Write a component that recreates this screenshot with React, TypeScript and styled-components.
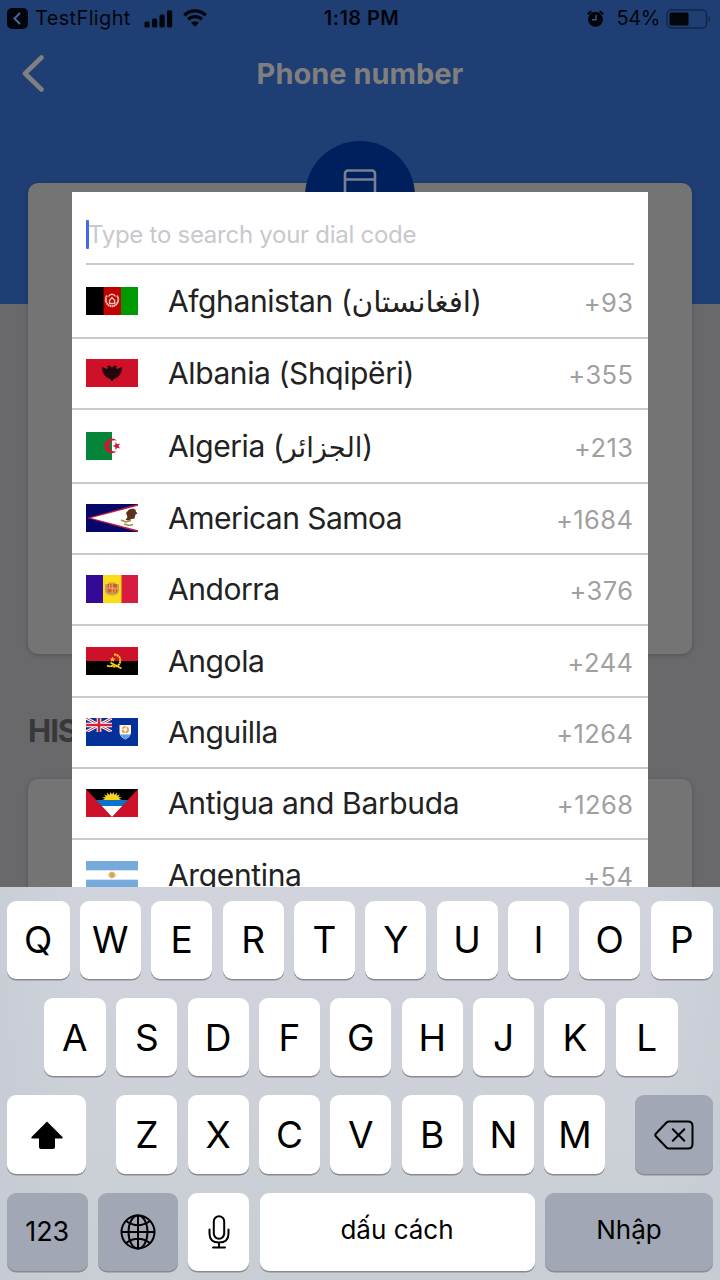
import React from "react";
import styled, { createGlobalStyle } from "styled-components";

const GlobalStyle = createGlobalStyle`
  * { box-sizing: border-box; }
  body { margin: 0; background: #69696c; }
`;

const Screen = styled.div`
  width: 720px;
  height: 1280px;
  display: flex;
  flex-direction: column;
  overflow: hidden;
  font-family: Inter, "Liberation Sans", "DejaVu Sans", sans-serif;
`;

const Page = styled.main`
  position: relative;
  height: 887px;
  flex: none;
  overflow: hidden;
  background: linear-gradient(#1f3e73 0 304px, #69696c 304px);
`;

/* ---------- status bar ---------- */

const StatusBar = styled.div`
  height: 36px;
  padding: 1px 9px 0 7px;
  display: grid;
  grid-template-columns: 1fr auto 1fr;
  align-items: center;
  color: #02050b;
  font-size: 20px;
  line-height: 24px;
`;

const StatusSide = styled.div<{ $end?: boolean }>`
  display: flex;
  align-items: center;
  justify-content: ${(p) => (p.$end ? "flex-end" : "flex-start")};
`;

const AppName = styled.span`
  margin: 0 13px 0 7px;
  padding-bottom: 1px;
  letter-spacing: 0.35px;
`;

const Clock = styled.span`
  font-weight: 600;
  letter-spacing: 0.4px;
  padding: 0 0 1px 5px;
`;

const Percent = styled.span`
  margin: 0 6px 0 12px;
  padding-bottom: 1px;
  letter-spacing: -0.4px;
`;

const WifiIcon = styled.svg`
  margin: 0 0 2px 10px;
`;

/* ---------- navigation ---------- */

const NavBar = styled.header`
  height: 74px;
  padding: 0 22px;
  display: grid;
  grid-template-columns: 24px 1fr 24px;
  align-items: center;
`;

const Title = styled.h1`
  margin: 0;
  text-align: center;
  font-size: 29px;
  font-weight: 700;
  color: #7f7f80;
`;

const Panel = styled.section<{ $height: number }>`
  height: ${(p) => p.$height}px;
  margin: 0 28px;
  border-radius: 10px;
  background: #747474;
  box-shadow: 0 1px 5px rgba(0, 0, 0, 0.22);
`;

const PanelStack = styled.div`
  padding-top: 73px;
`;

const Badge = styled.div`
  width: 110px;
  height: 110px;
  margin: 0 auto;
  border-radius: 50%;
  background: #00205d;
  display: flex;
  justify-content: center;
  padding-top: 27px;
  transform: translateY(-42px);
`;

const SectionTitle = styled.h2`
  margin: 0;
  height: 125px;
  padding: 0 28px;
  font-size: 31px;
  line-height: 153px;
  font-weight: 700;
  letter-spacing: -1px;
  color: #38383b;
`;

/* ---------- dial code picker ---------- */

const Picker = styled.div`
  position: absolute;
  top: 192px;
  left: 72px;
  width: 576px;
  height: 695px;
  overflow: hidden;
  background: #fff;
`;

const SearchField = styled.div`
  height: 73px;
  margin: 0 14px;
  padding-top: 13px;
  display: flex;
  align-items: center;
  border-bottom: 2px solid #cbcbcb;
`;

const Caret = styled.span`
  width: 3px;
  height: 29px;
  border-radius: 1px;
  background: #4469e8;
`;

const Placeholder = styled.span`
  margin-left: -1px;
  font-size: 24px;
  letter-spacing: -0.27px;
  color: #c8c8cd;
  white-space: nowrap;
`;

const Row = styled.div<{ $height: number }>`
  height: ${(p) => p.$height}px;
  padding: 0 15px ${(p) => (p.$height === 71 ? 1 : 0)}px 14px;
  display: flex;
  align-items: center;
  border-bottom: 2px solid #cacaca;
`;

const Flag = styled.svg`
  width: 52px;
  height: 28px;
  flex: none;
`;

const Name = styled.span<{ $track: number }>`
  flex: 1;
  margin-left: 30px;
  font-size: 30px;
  line-height: 40px;
  letter-spacing: ${(p) => p.$track}px;
  color: #222;
  white-space: nowrap;
`;

const Native = styled.span<{ $size: number }>`
  font-family: "DejaVu Sans", sans-serif;
  font-size: ${(p) => p.$size}px;
  line-height: 30px;
  letter-spacing: 0;
`;

const Code = styled.span`
  font-size: 25.5px;
  letter-spacing: 0.45px;
  margin-right: -0.5px;
  padding-top: 2px;
  color: #a0a0a0;
`;

/* ---------- keyboard ---------- */

const Keyboard = styled.div`
  flex: 1;
  padding: 13.8px 7px 8px;
  display: flex;
  flex-direction: column;
  gap: 18.9px;
  background: linear-gradient(90deg, rgba(196, 202, 210, 0.6), rgba(206, 209, 217, 0) 12% 90%, rgba(196, 202, 210, 0.5)),
    linear-gradient(#d1d4dc, #c9cdd4);
`;

const KeyRow = styled.div<{ $inset?: number }>`
  height: 78.4px;
  padding: 0 ${(p) => p.$inset ?? 0}px;
  display: flex;
  gap: 10.35px;
`;

const Key = styled.div<{ $width?: number; $dark?: boolean; $size?: number; $before?: number; $lift?: number }>`
  flex: ${(p) => (p.$width ? `0 0 ${p.$width}px` : "1 1 0")};
  margin-left: ${(p) => p.$before ?? 0}px;
  padding-bottom: ${(p) => p.$lift ?? 0}px;
  display: flex;
  align-items: center;
  justify-content: center;
  border-radius: 9px;
  background: ${(p) => (p.$dark ? "#a1a7b4" : "#fff")};
  box-shadow: 0 1.5px 0 #898b90;
  color: #000;
  font-size: ${(p) => p.$size ?? 37}px;
  white-space: nowrap;
`;

/* ---------- flags ---------- */

const flags: Record<string, React.ReactNode> = {
  af: (
    <>
      <rect width="18" height="28" fill="#000" />
      <rect x="17.5" width="17.5" height="28" fill="#c10000" />
      <rect x="35" width="17" height="28" fill="#009900" />
      <g fill="none" stroke="#f3c4bb">
        <path d="M21 8.500c-3 5 0 10.500 5 10.800 5-.3 8-5.800 5-10.800" strokeWidth="2" strokeDasharray="1.600 .4" />
        <path d="M22.500 9.500c1.500-3 5.500-3 7 0M23 16.500h6.500M23.500 13.500l2.500-3 2.700 3v3h-5.200z" strokeWidth="1.300" />
      </g>
    </>
  ),
  al: (
    <>
      <rect width="52" height="28" fill="#ce1028" />
      <path
        d="M26 9l-2-2.500-3 .5 1 1.500-1 1.500-5-2 .5 5 1.500 1-1 1 2 .5-1 1.500 2.500-.5-1 2.500 3-1-.5 2 2-.5 2 3 2-3 2 .5-.5-2 3 1-1-2.500 2.500.5-1-1.500 2-.5-1-1 1.500-1 .5-5-5 2-1-1.500 1-1.500-3-.500z"
        fill="#22060a"
      />
    </>
  ),
  dz: (
    <>
      <rect width="26" height="28" fill="#048539" />
      <path d="M31 8.700A7.400 7.400 0 1 0 31 19.100 5.700 5.700 0 1 1 31 8.700z" fill="#d5152e" />
      <path d="M26.300 14l3-1 .2-3 1.800 2.300 2.800-.9-1.600 2.600 1.600 2.500-2.800-.8-1.800 2.300-.2-3z" fill="#d5152e" />
    </>
  ),
  as: (
    <>
      <rect width="52" height="28" fill="#07076a" />
      <path d="M1 14L52 0v28z" fill="#c01c3c" />
      <path d="M5 14L52 1.800v24.400z" fill="#fff" />
      <path d="M40 9l3-3.500 4-1 3 1.500-.5 1 2 2.500-2 1-1 4-3 .5-3 1.500-3-.5 2-3z" fill="#5a3021" />
      <path d="M35 16l5 2 5-1.500M38 20l5 1.500 4-1" stroke="#a58a4c" strokeWidth="1.500" fill="none" />
    </>
  ),
  ad: (
    <>
      <rect width="17.500" height="28" fill="#330a96" />
      <rect x="17" width="19" height="28" fill="#fbdd17" />
      <rect x="35.500" width="16.500" height="28" fill="#d81c40" />
      <path d="M19 9q3 1 4-1.500h6q1 2.500 4 1.500v8q-2 3.500-7 3.500t-7-3.500z" fill="#c7a253" />
      <rect x="21.500" y="9" width="9.500" height="8.500" fill="#d35a35" />
      <path d="M26.200 9v8.500M21.500 13.200H31M23.500 9.500v3M29 14v3" stroke="#ecc169" strokeWidth=".9" />
    </>
  ),
  ao: (
    <>
      <rect width="52" height="14" fill="#ce1028" />
      <rect y="14" width="52" height="14" fill="#000" />
      <g fill="none" stroke="#f6cf21">
        <path d="M28 7.500c5 0 7 4 6 8s-6 5-9 3" strokeWidth="2" strokeDasharray="2.200 .4" />
        <path d="M21 18.500q3 2 6-.5M24.500 15.500l11 6" strokeWidth="1.600" />
      </g>
      <path d="M26.500 9.500l.8 2 2 .1-1.600 1.300.5 2-1.700-1.100-1.800 1 .6-2-1.500-1.300h2z" fill="#f6cf21" />
    </>
  ),
  ai: (
    <>
      <rect width="52" height="28" fill="#04309a" />
      <path d="M0 0l26 14M26 0L0 14" stroke="#fff" strokeWidth="3" />
      <path d="M0 0l26 14M26 0L0 14" stroke="#d02a3e" strokeWidth="1" />
      <path d="M13 0v14M0 7h26" stroke="#fff" strokeWidth="4.600" />
      <path d="M13 0v14M0 7h26" stroke="#d3223a" strokeWidth="2.600" />
      <rect y="14" width="34" height="3" fill="#04309a" />
      <rect x="26" width="4" height="17" fill="#04309a" />
      <path d="M33.500 7h11.500v8q-1 4.500-5.700 6.500-4.800-2-5.800-6.500z" fill="#f8f6ee" />
      <path d="M34 16.500h10.600q-1.500 3-5.300 5-3.800-2-5.300-5z" fill="#5b9fdc" />
      <circle cx="39.300" cy="11.700" r="2.800" fill="none" stroke="#ee9d43" strokeWidth="1.800" strokeDasharray="3.800 1" />
    </>
  ),
  ag: (
    <>
      <rect width="52" height="28" fill="#ce1028" />
      <path d="M0 0h52L26 28z" fill="#000" />
      <path d="M10 11h32l-6 6.500H16z" fill="#0f72c6" />
      <path d="M15.800 17h20.400L26 28z" fill="#fff" />
      <path
        d="M16 11l3-1-2.500-2 3.300.2-1.500-3 3 1.600-.3-3.200L23.500 6 24.600 3 26 5.500 27.400 3l1.100 3 2.500-2.400-.3 3.200 3-1.600-1.500 3 3.300-.2L33 10l3 1z"
        fill="#fcd31c"
      />
    </>
  ),
  ar: (
    <>
      <rect width="52" height="28" fill="#fff" />
      <rect width="52" height="9.300" fill="#75aadb" />
      <rect y="18.700" width="52" height="9.300" fill="#75aadb" />
      <circle cx="26" cy="14" r="2.900" fill="#dca450" />
      <ellipse cx="26" cy="14" rx="3.800" ry="3" fill="none" stroke="#e3bd84" strokeWidth="1" strokeDasharray="1 .8" />
    </>
  ),
};

interface Country {
  id: string;
  name: string;
  native?: string;
  nativeSize?: number;
  code: string;
  height: number;
  track: number;
}

const countries: Country[] = [
  { id: "af", name: "Afghanistan", native: "افغانستان", nativeSize: 29.5, code: "+93", height: 74, track: -0.4 },
  { id: "al", name: "Albania (Shqipëri)", code: "+355", height: 71, track: -0.4 },
  { id: "dz", name: "Algeria", native: "الجزائر", nativeSize: 27.3, code: "+213", height: 74, track: -0.4 },
  { id: "as", name: "American Samoa", code: "+1684", height: 71, track: -0.52 },
  { id: "ad", name: "Andorra", code: "+376", height: 71, track: -0.45 },
  { id: "ao", name: "Angola", code: "+244", height: 72, track: -0.4 },
  { id: "ai", name: "Anguilla", code: "+1264", height: 71, track: -0.4 },
  { id: "ag", name: "Antigua and Barbuda", code: "+1268", height: 71, track: -0.35 },
  { id: "ar", name: "Argentina", code: "+54", height: 72, track: -0.35 },
];

const CountryRow = ({ country }: { country: Country }) => (
  <Row $height={country.height}>
    <Flag viewBox="0 0 52 28">{flags[country.id]}</Flag>
    <Name $track={country.track}>
      {country.name}
      {country.native && (
        <>
          {" ("}
          <Native $size={country.nativeSize ?? 27}>{country.native}</Native>)
        </>
      )}
    </Name>
    <Code>{country.code}</Code>
  </Row>
);

const Status = () => (
  <StatusBar>
    <StatusSide>
      <svg width="21" height="21" viewBox="0 0 21 21">
        <rect width="21" height="21" rx="5" fill="#02050b" />
        <path d="M12.500 5.500L7.500 10.500l5 5" fill="none" stroke="#4a669b" strokeWidth="2" strokeLinecap="round" />
      </svg>
      <AppName>TestFlight</AppName>
      <svg width="29" height="18" viewBox="0 0 29 18" fill="#02050b">
        <rect x="0.500" y="11.500" width="5.200" height="6" rx="1.500" />
        <rect x="8" y="8.500" width="5.200" height="9" rx="1.500" />
        <rect x="15.500" y="4.500" width="5.200" height="13" rx="1.500" />
        <rect x="23" y="0.200" width="5.200" height="17.300" rx="1.500" />
      </svg>
      <WifiIcon width="24" height="18" viewBox="0 0 24 18">
        <path d="M1.300 6.200a15.500 15.500 0 0 1 21.400 0M5.200 10.400a9.800 9.800 0 0 1 13.600 0" fill="none" stroke="#02050b" strokeWidth="3.400" />
        <path d="M12 17.800l-4-4a5.700 5.700 0 0 1 8 0z" fill="#02050b" />
      </WifiIcon>
    </StatusSide>
    <Clock>1:18 PM</Clock>
    <StatusSide $end>
      <svg width="17" height="18" viewBox="0 0 17 18">
        <circle cx="8.500" cy="9.300" r="7.500" fill="#02050b" />
        <path d="M1.200 3.700l2.600-2.200M15.800 3.700l-2.600-2.200" stroke="#02050b" strokeWidth="1.800" strokeLinecap="round" />
        <path d="M9 5v4.800H5" stroke="#3c5687" strokeWidth="1.400" fill="none" />
      </svg>
      <Percent>54%</Percent>
      <svg width="45" height="20" viewBox="0 0 45 20">
        <rect x="1" y="1" width="39.500" height="18" rx="4" fill="none" stroke="#122747" strokeWidth="1.500" />
        <rect x="3.500" y="3.500" width="19" height="13" rx="1.500" fill="#02050b" />
        <path d="M42.500 7a3.500 3.500 0 0 1 0 6z" fill="#122747" />
      </svg>
    </StatusSide>
  </StatusBar>
);

const letters = (row: string) => row.split("").map((c) => <Key key={c} $width={61}>{c}</Key>);

export default function App() {
  return (
    <>
      <GlobalStyle />
      <Screen>
        <Page>
          <Status />
          <NavBar>
            <svg width="23" height="38" viewBox="0 0 23 38">
              <path d="M19.500 3.500L3 19.500l16.500 16" fill="none" stroke="#808080" strokeWidth="4.600" strokeLinecap="round" strokeLinejoin="round" />
            </svg>
            <Title>Phone number</Title>
          </NavBar>
          <PanelStack>
            <Panel $height={471}>
              <Badge>
                <svg width="34" height="56" viewBox="0 0 34 56">
                  <rect x="2" y="2.500" width="30" height="52" rx="3" fill="none" stroke="#7a8090" strokeWidth="2.600" />
                  <path d="M2 11.500h30" stroke="#7a8090" strokeWidth="2.500" />
                </svg>
              </Badge>
            </Panel>
            <SectionTitle>HIS</SectionTitle>
            <Panel $height={200} />
          </PanelStack>
          <Picker>
            <SearchField>
              <Caret />
              <Placeholder>Type to search your dial code</Placeholder>
            </SearchField>
            {countries.map((c) => (
              <CountryRow key={c.id} country={c} />
            ))}
          </Picker>
        </Page>
        <Keyboard>
          <KeyRow>
            <Key $width={62.5}>Q</Key>
            {letters("WERTYUIO")}
            <Key>P</Key>
          </KeyRow>
          <KeyRow $inset={36.500}>
            <Key $width={62.5}>A</Key>
            {letters("SDFGHJK")}
            <Key $width={62}>L</Key>
          </KeyRow>
          <KeyRow>
            <Key $width={78.5}>
              <svg width="36" height="30" viewBox="-2 0 36 30">
                <path d="M17 1.500L32.500 17q.8 1.500-.8 1.500H25V27q0 2-2 2H11q-2 0-2-2v-8.500H2.300q-1.600 0-.8-1.500z" fill="#000" />
              </svg>
            </Key>
            <Key $width={61} $before={20.5}>Z</Key>
            {letters("XCVBNM")}
            <Key $width={78} $before={19.5} $dark>
              <svg width="40" height="30" viewBox="0 0 40 30" fill="none" stroke="#000" strokeLinecap="round" strokeLinejoin="round">
                <path d="M15 1.500h19q4.500 0 4.500 4.500v18q0 4.500-4.500 4.500H15q-1.500 0-2.500-1L1.800 16.300q-1-1.300 0-2.600L12.500 2.500q1-1 2.500-1z" strokeWidth="2" />
                <path d="M18.800 9.200l11.500 11.600M30.300 9.200L18.800 20.800" strokeWidth="2" />
              </svg>
            </Key>
          </KeyRow>
          <KeyRow>
            <Key $width={80.5} $size={27} $dark>123</Key>
            <Key $width={80} $dark>
              <svg width="36" height="36" viewBox="0 0 36 36" fill="none" stroke="#000" strokeWidth="2">
                <circle cx="18" cy="18" r="16.500" />
                <ellipse cx="18" cy="18" rx="9.500" ry="16.500" />
                <path d="M18 1.500v33M1.500 18h33M6 7q12 8.500 24 0M6 29q12-8.500 24 0" />
              </svg>
            </Key>
            <Key $width={61}>
              <svg width="22" height="34" viewBox="0 0 22 34" fill="none" stroke="#000" strokeWidth="2" strokeLinecap="round">
                <rect x="5.800" y="1.200" width="10.400" height="22.500" rx="5.200" />
                <path d="M1.500 14.500v4q0 9 9.500 9t9.500-9v-4M11 27.500V32.500M5 32.500h12" />
              </svg>
            </Key>
            <Key $width={275} $size={26} $lift={4}>dấu cách</Key>
            <Key $size={26} $lift={4} $dark>Nhập</Key>
          </KeyRow>
        </Keyboard>
      </Screen>
    </>
  );
}
